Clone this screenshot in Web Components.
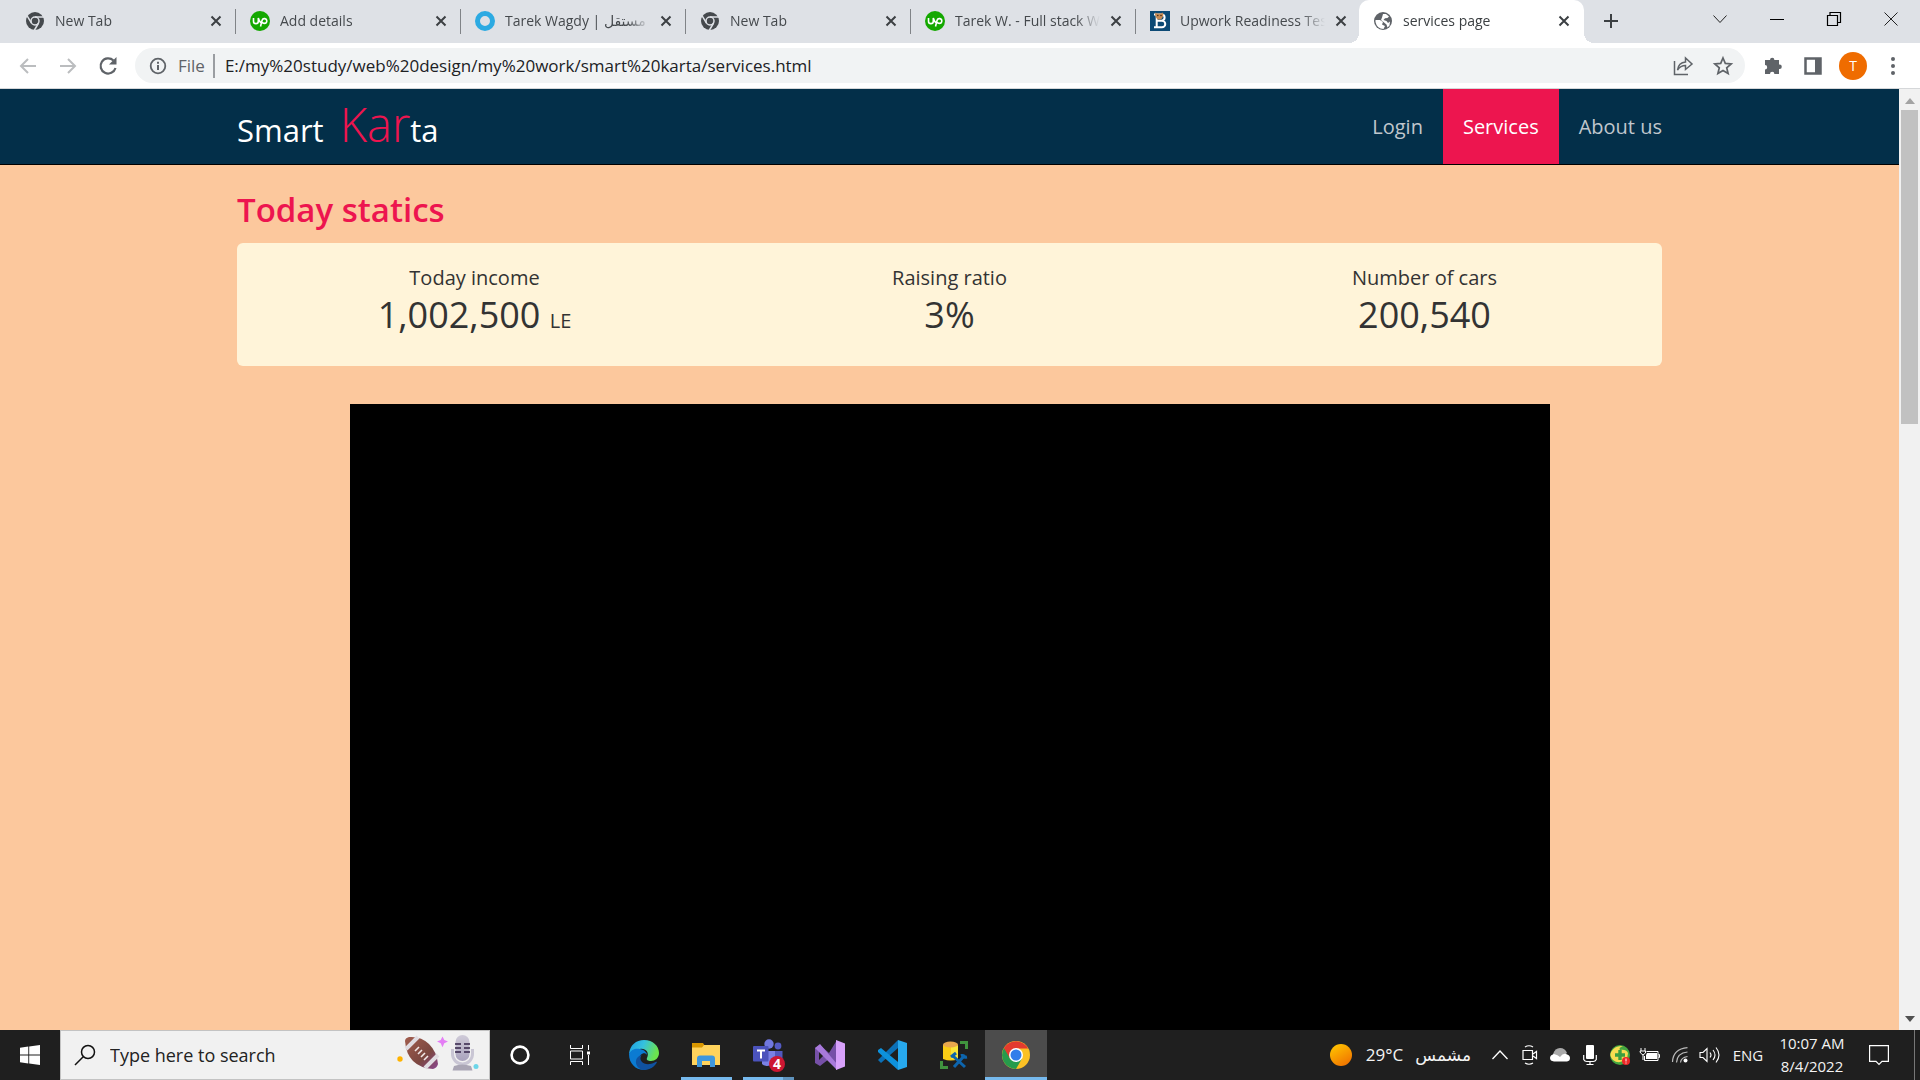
<!DOCTYPE html>
<html lang="en">
<head>
<meta charset="utf-8">
<title>services page</title>
<style>
html, body { margin: 0; height: 100%; }
body { font-family: "Open Sans", "Noto Sans", "DejaVu Sans", sans-serif; overflow: hidden; }
</style>
</head>
<body>
<desktop-screen>
  <browser-tabs slot="browser">
    <browser-tab icon="chromeGrey">New Tab</browser-tab>
    <browser-tab icon="upwork">Add details</browser-tab>
    <browser-tab icon="ring">Tarek Wagdy | مستقل</browser-tab>
    <browser-tab icon="chromeGrey">New Tab</browser-tab>
    <browser-tab icon="upwork">Tarek W. - Full stack Web</browser-tab>
    <browser-tab icon="bear">Upwork Readiness Test</browser-tab>
    <browser-tab icon="globe" active>services page</browser-tab>
  </browser-tabs>
  <browser-toolbar slot="browser"></browser-toolbar>
  <page-view slot="page">
    <site-header>
      <nav-link>Login</nav-link>
      <nav-link active>Services</nav-link>
      <nav-link>About us</nav-link>
    </site-header>
    <site-stats>
      <stat-item label="Today income">1,002,500 <small>LE</small></stat-item>
      <stat-item label="Raising ratio">3%</stat-item>
      <stat-item label="Number of cars">200,540</stat-item>
    </site-stats>
    <media-panel></media-panel>
  </page-view>
  <task-bar slot="taskbar"></task-bar>
</desktop-screen>

<script>
const ICONS = {
  chromeGrey: [20, 20, `<circle cx="10" cy="10" r="9" fill="#45494d"/><circle cx="10" cy="10" r="4" fill="none" stroke="#dee1e6" stroke-width="1.5"/><path d="M10 5.9h9M6.5 12.1 2 4.6M13.6 12 9.2 19.5" stroke="#dee1e6" stroke-width="1.5"/>`],
  upwork: [20, 20, `<circle cx="10" cy="10" r="10" fill="#14a800"/><path d="M3.5 7v3.2a2.4 2.4 0 0 0 4.8 0V7q1.4 4.500 3.600 5.200M10.500 15.500l1.600-6.200a2.400 2.400 0 1 1 2.300 3.100q-1.600 0-3.200-2" fill="none" stroke="#fff" stroke-width="1.600"/>`],
  ring: [20, 20, `<circle cx="10" cy="10" r="7.500" fill="#dee1e6" stroke="#2caae2" stroke-width="5"/>`],
  bear: [20, 20, `<path fill="#0c4a75" d="M0 0h20v20H0z"/><path d="M4 3.500h7.500a3 3 0 0 1 0 6.200H7.500h4.500a3.200 3.200 0 0 1 0 6.500H4M6.700 4v12" fill="none" stroke="#fff" stroke-width="2"/><path fill="#c68c55" d="M5.500 1.500 7 2.500h4l1.500-1 1 2-1 3-1.500 2H7.500L6 6.500l-1-3z"/><circle cx="7.800" cy="4.500" r=".8" fill="#4b2d16"/><circle cx="11" cy="4.500" r=".8" fill="#4b2d16"/>`],
  globe: [20, 20, `<circle cx="10" cy="10" r="9" fill="#5f6368"/><path d="M2.500 9h4.500l3 2-1 2.500 3 1.500-1.500 3Q4 18 2.500 11zM10 3h3l3 2.500-1.500 1.500-2.500.3L10.500 9l3 1 1.500 2 2-1.500-.5 4-2 2-1-3-3-2.500-2.500-2L9 6.500z" fill="#fff"/>`],
  x: [12, 12, `<path d="m1.500 1.500 9 9m0-9-9 9" stroke="#3c4043" stroke-width="2"/>`],
  plus: [16, 16, `<path d="M8 1v14M1 8h14" stroke="#3c4043" stroke-width="2"/>`],
  down: [14, 10, `<path d="m.5 1.500 6.500 7 6.500-7" fill="none" stroke="#222"/>`],
  min: [14, 14, `<path d="M0 7.500h14" stroke="#000"/>`],
  restore: [14, 14, `<path d="M.5 3.500h10v10H.5zM3 3.500v-3h10.500v10H11" fill="none" stroke="#000" stroke-width="1.200"/>`],
  close: [14, 14, `<path d="m.5.5 13 13m0-13-13 13" stroke="#222"/>`],
  back: [18, 18, `<path d="M17 9H2m7-7L2 9l7 7" fill="none" stroke="#bbbdbf" stroke-width="2"/>`],
  forward: [18, 18, `<path d="M1 9h15M9 2l7 7-7 7" fill="none" stroke="#bbbdbf" stroke-width="2"/>`],
  reload: [20, 20, `<path d="M15.500 4.500A7.600 7.600 0 1 0 17.500 12" fill="none" stroke="#5f6368" stroke-width="2.200"/><path fill="#5f6368" d="M18.500 1v7.500H11z"/>`],
  info: [18, 18, `<circle cx="9" cy="9" r="7.300" fill="none" stroke="#5f6368" stroke-width="1.800"/><path d="M9 8v5M9 4.800v2" stroke="#5f6368" stroke-width="2"/>`],
  share: [20, 20, `<path d="M1.500 5v13.500H15" fill="none" stroke="#5f6368" stroke-width="1.500"/><path d="M4.500 14q1-7.500 8-8V2L19 8l-6.500 5.500v-4Q7.500 9.500 4.500 14z" fill="none" stroke="#5f6368" stroke-width="1.500"/>`],
  star: [20, 20, `<path d="m10 2 2.300 5.400 5.900.5-4.500 3.900 1.400 5.700-5.100-3.100-5.100 3.100 1.400-5.700L1.800 7.900l5.900-.5z" fill="none" stroke="#5f6368" stroke-width="1.700"/>`],
  puzzle: [20, 20, `<path fill="#5f6368" d="M7 4a2.200 2.200 0 0 1 4.400 0H16v4.600h.6a2.200 2.200 0 0 1 0 4.400H16v5h-4.600a2.200 2.200 0 0 0-4.400 0H2v-4.600a2.200 2.200 0 0 0 0-4.400V4z"/>`],
  panel: [18, 20, `<path d="M1.500 2.500h15v15h-15z" fill="none" stroke="#5f6368" stroke-width="2.500"/><path fill="#5f6368" d="M11 2h6v16h-6z"/>`],
  dots: [4, 18, `<g fill="#5f6368"><circle cx="2" cy="2" r="2"/><circle cx="2" cy="9" r="2"/><circle cx="2" cy="16" r="2"/></g>`],
  win: [20, 20, `<path fill="#fff" d="m0 2.700 8.300-1.100v8H0zM9.200 1.500 20 0v9.600H9.200zM0 10.500h8.300v8L0 17.300zM9.200 10.500H20V20L9.200 18.600z"/>`],
  search: [22, 22, `<circle cx="14" cy="8" r="6.500" fill="none" stroke="#111" stroke-width="1.500"/><path d="M9.200 12.800 1 21" stroke="#111" stroke-width="1.500"/>`],
  doodle: [82, 40, `<defs><linearGradient id="b" x2="1" y2="1"><stop stop-color="#a25d4e"/><stop offset=".6" stop-color="#7b4740"/><stop offset="1" stop-color="#8b4790"/></linearGradient><linearGradient id="m" x2="0" y2="1"><stop stop-color="#cfcbd8"/><stop offset="1" stop-color="#a9a3bd"/></linearGradient></defs>
   <path fill="url(#b)" d="M8 6q0-3 4-4 12-1 20 7t9 20q-1 4-5 5-13-1-20-8T8 6z"/><path d="M9 14 21 2M28 33l13-13" stroke="#e0dce2" stroke-width="4"/><path d="m18 16 4-4m-1 7 4-4m-1 7 4-4m-1 7 4-4" stroke="#f2e8e8" stroke-width="1.600"/><circle cx="3" cy="24" r="2.700" fill="#ffb300"/><path fill="#e47ef5" d="m45.500 1.500 1.800 3.500 3.700 1.500-3.700 1.800-1.800 4-1.800-4L40 6.500 43.700 5z"/>
   <path d="M55.500 14v5a10 10 0 0 0 20 0v-5M65.500 29v5" fill="none" stroke="#c9c6d4" stroke-width="3"/><rect x="58.500" y="0" width="14" height="26" rx="7" fill="url(#m)"/><path d="M58 9h6m3 0h6M58 13h6m3 0h6M58 17h6m3 0h6" stroke="#342449" stroke-width="1.700"/><path fill="#aaa6b5" d="M57 31q8-3 17 0l1.500 4.500h-20z"/><circle cx="79" cy="31.500" r="2.500" fill="#6bd5e8"/>`],
  cortana: [20, 20, `<circle cx="10" cy="10" r="8.400" fill="none" stroke="#fff" stroke-width="2.600"/>`],
  taskview: [20, 20, `<path d="M.5 0v3.500h12V0M.5 20v-3.500h12V20M.5 6h12v8H.5zM18.500 0v5m0 5v10" fill="none" stroke="#fff"/><path fill="#fff" d="M17 6.500h3v3h-3z"/>`],
  edge: [30, 30, `<defs><linearGradient id="e" x2="1" y2=".3"><stop stop-color="#1b9de2"/><stop offset=".5" stop-color="#35c1df"/><stop offset="1" stop-color="#6be34d"/></linearGradient></defs><path fill="url(#e)" d="M0 14C1 5 7 0 15 0c9 0 15 6 15 13 0 5-4 8-8 8-3 0-5-1-4-3 3-6-2-10-7-9C6 9 2 12 0 14z"/><path fill="#0b7bd2" d="M0 14C2 9 7 8 11 9c5 1 7 4 7 6-2-4-8-1-8 4 0 6 5 10 11 9-9 5-21-1-21-14z"/><path fill="#10529f" d="M12.500 15C9 21 15 25 21 24c4-.5 6-3 7-2-2 5-8 8-13 8-8 0-12-12-2.500-15z"/>`],
  folder: [28, 24, `<path fill="#d99700" d="M0 0h11l2 3h6v5H0z"/><path fill="#ffd35c" d="M0 4.500h10l2-2.500h16v20H0z"/><path fill="#3e97dd" d="M8 12.500h12a3 3 0 0 1 3 3V24h-5v-6h-8v6H5v-8.500a3 3 0 0 1 3-3z"/>`],
  teams: [34, 32, `<circle cx="18" cy="5" r="4.700" fill="#7178df"/><circle cx="27" cy="7" r="3.400" fill="#545bc4"/><path fill="#7a81e5" d="M11 12h13v9a8 8 0 0 1-13 4z"/><path fill="#5158bd" d="M24 12h7.500v10q-3 5-7.500 1z"/><rect x="2" y="7" width="15.500" height="15.500" rx="1" fill="#4b53bc"/><path d="M6 11.500h8M10 11.500v8" stroke="#fff" stroke-width="2"/><circle cx="26" cy="25" r="8" fill="#cc1733"/>`],
  vs: [30, 30, `<path fill="#7650a7" d="M0 8 5 5l9 8L22 0v30l-8-11-9 7-5-3zM4 11v9l5-5z" fill-rule="evenodd"/><path fill="#a879db" d="m0 8 5-4 17 20v6L1 9z"/><path fill="#d8a1fb" d="m21 0 9 3.500v23L21 30z"/>`],
  vscode: [30, 30, `<path fill="#0b70b7" d="M1 20 21 0v8L4 23z"/><path fill="#0d91dc" d="m1 10 3-2 17 14v8L1 12z"/><path fill="#27a9ee" d="m21 0 9 3v24l-9 3z"/>`],
  sql: [28, 28, `<path fill="#f9cc15" d="M3 4h15v14q-7 3-15 0z"/><path fill="#f9e63a" d="M11 5h7v13h-7z"/><ellipse cx="10.500" cy="3.500" rx="7.500" ry="3" fill="#e8a74d"/><path d="M20 1.500h6.500V8M1.500 20v6.500H8" fill="none" stroke="#40933e" stroke-width="3"/><path d="m14 26 11-12M13 15l12 11" stroke="#0d65ad" stroke-width="3"/><path d="m11 16 5-4M22 13q0 4 5 3" fill="none" stroke="#0d65ad" stroke-width="3"/>`],
  chrome: [28, 28, `<circle cx="14" cy="14" r="14" fill="#fbc125"/><path fill="#269b4c" d="M14 14 1.900 7A14 14 0 0 0 14 28l6-10.500z"/><path fill="#e33b2e" d="M1.900 7a14 14 0 0 1 24.200 0.500H14L8 17.500z"/><circle cx="14" cy="14" r="7" fill="#fff"/><circle cx="14" cy="14" r="5.500" fill="#327eea"/>`],
  sun: [22, 22, `<defs><linearGradient id="s" x1=".2" x2=".8" y2="1"><stop stop-color="#ffc400"/><stop offset="1" stop-color="#f07000"/></linearGradient></defs><circle cx="11" cy="11" r="11" fill="url(#s)"/>`],
  up: [16, 10, `<path d="m.5 9 7.500-8 7.500 8" fill="none" stroke="#fff" stroke-width="1.300"/>`],
  meet: [16, 20, `<path d="M1 5.500h9.500v9H1zM11 9l3.500-2.500v7L11 11M3 2q4-2.500 8 0M3 18q4 2.500 8 0" fill="none" stroke="#fff" stroke-width="1.200"/>`],
  cloud: [20, 14, `<path fill="#aaa" d="M3 6Q5 0 10 0q5 0 7 5L9 12H3z"/><path fill="#fff" d="M4 13.500Q0 13 0 10q0-3 4-4 4 1 6 3 3-4 6-3 4 1 4 4t-3 3.500z"/>`],
  mic: [14, 20, `<rect x="3" width="8" height="14" rx="1" fill="#fff"/><path d="M.7 10v4.500q1 2 3 2h6.600q2 0 3-2V10M7 16.500v3M3.500 19.500h7" fill="none" stroke="#fff" stroke-width="1.200"/>`],
  antivirus: [20, 20, `<circle cx="10" cy="10" r="10" fill="#45a840"/><path fill="#f7dc51" d="M1 7q4-7 12-6-5 2-3 4 6-1 8 3l-1 6q-8 6-14 1-4-4-2-8z"/><path d="M10 5v10M5 10h10" stroke="#3c9e40" stroke-width="3.400"/><circle cx="16" cy="16" r="4" fill="#ee2828"/><path d="M16 13.500v3m0 1v1" stroke="#fff"/>`],
  battery: [20, 14, `<path fill="#fff" d="M7 5h10v6H6V7z"/><path d="M6.500 3.500h11.500v9H4.500V8M18.500 6.500h1v3h-1M1 0v3m4-3v3M0 3h5.500v2L3 7 .5 5zM3 7v5" fill="none" stroke="#fff"/>`],
  wifi: [16, 16, `<path d="M.5 15Q1 2 15.500.7M4.500 15.500Q5 6 15.500 5M8.500 15.500Q9 10.500 15.500 9.500" fill="none" stroke="#bbb" stroke-width="1.200"/><circle cx="13.500" cy="13.500" r="2" fill="#fff"/>`],
  sound: [22, 18, `<path d="M1 6.500h3l4-4v13l-4-4H1zM11 6.500q2 2.500 0 5M14 4q4 5 0 10M17 1.500q6 7.500 0 15" fill="none" stroke="#fff" stroke-width="1.100"/>`],
  note: [20, 20, `<path d="M.6.600h18.800v15.800H13l-3 3-3-3H.6z" fill="none" stroke="#fff" stroke-width="1.200"/>`],
  arrowUp: [10, 6, `<path fill="#a3a3a3" d="m5 0 5 6H0z"/>`],
  arrowDown: [10, 6, `<path fill="#505050" d="M0 0h10L5 6z"/>`]
};

function define(name, render) {
  customElements.define(name, class extends HTMLElement {
    constructor() { super(); this.attachShadow({ mode: "open" }); }
    connectedCallback() {
      const t = document.createElement("template");
      t.innerHTML = render(this);
      this.shadowRoot.replaceChildren(t.content.cloneNode(true));
    }
  });
}
const RESET = `button, input { font: inherit; color: inherit; border: 0; margin: 0; padding: 0; background: none; outline: 0; }
button { display: flex; align-items: center; justify-content: center; }`;

define("ui-icon", el => {
  const [w, h, body] = ICONS[el.getAttribute("name")];
  return `<style>:host { display: block; flex: none; } svg { display: block; overflow: visible; }</style>
  <svg width="${w}" height="${h}" viewBox="0 0 ${w} ${h}" aria-hidden="true">${body}</svg>`;
});

define("desktop-screen", () => `<style>
  :host { display: flex; flex-direction: column; height: 100vh; }
  main { flex: 1; min-height: 0; display: flex; }
  ::slotted(page-view) { flex: 1; }
  </style><slot name="browser"></slot><main><slot name="page"></slot></main><slot name="taskbar"></slot>`);

define("browser-tabs", () => `<style>${RESET}
  :host { display: flex; height: 43px; background: #dee1e6; padding-left: 11px; }
  .tabs { display: flex; flex: 0 1 1575px; min-width: 0; }
  .add { width: 50px; height: 42px; }
  .window { display: flex; margin-left: auto; padding-right: 1px; }
  .window button { width: 57px; height: 38px; }
  </style>
  <div class="tabs"><slot></slot></div>
  <button class="add" aria-label="New tab"><ui-icon name="plus"></ui-icon></button>
  <div class="window">${["down", "min", "restore", "close"].map(n => `<button aria-label="${n}"><ui-icon name="${n}"></ui-icon></button>`).join("")}</div>`);

define("browser-tab", el => `<style>${RESET}
  :host { display: flex; flex: 1 1 0; min-width: 0; height: 43px; box-sizing: border-box; align-items: center; gap: 10px; padding: 0 14px 1px; font-size: 14px; line-height: 20px; color: #45494d; position: relative; }
  :host(:not([active]))::after { content: ""; position: absolute; right: 0; top: 9px; width: 1px; height: 25px; background: #808387; }
  :host(:nth-last-child(2))::after { display: none; }
  :host([active]) { background: #fff; border-radius: 10px 10px 0 0; color: #3c4043; margin: 0 2px 0 -2px; }
  :host([active])::before, :host([active])::after { content: ""; position: absolute; bottom: 0; width: 10px; height: 10px; }
  :host([active])::before { right: 100%; background: radial-gradient(circle at 0 0, transparent 10px, #fff 10px); }
  :host([active])::after { left: 100%; background: radial-gradient(circle at 100% 0, transparent 10px, #fff 10px); }
  .title { flex: 1; min-width: 0; overflow: hidden; white-space: nowrap; -webkit-mask-image: linear-gradient(90deg, #000 calc(100% - 24px), transparent); }
  </style>
  <ui-icon name="${el.getAttribute("icon")}"></ui-icon><span class="title"><slot></slot></span>
  <button aria-label="Close tab"><ui-icon name="x"></ui-icon></button>`);

define("browser-toolbar", () => `<style>${RESET}
  :host { display: flex; align-items: center; height: 45px; background: #fff; border-bottom: 1px solid #d5d7d9; padding: 0 7px 0 8px; }
  button { width: 40px; height: 40px; flex: none; }
  .box { flex: 1; display: flex; align-items: center; height: 35px; margin: 0 8px 0 7px; padding: 0 2px 0 14px; border-radius: 18px; background: #f1f3f4; font-size: 17px; line-height: 24px; color: #202124; }
  label { color: #5f6368; padding: 0 8px 0 11px; border-right: 2px solid #9a9da1; line-height: 24px; }
  input { flex: 1; min-width: 0; padding-left: 10px; }
  .avatar { display: flex; align-items: center; justify-content: center; width: 28px; height: 28px; border-radius: 50%; background: #ef6c00; color: #fff; font-size: 14px; line-height: 20px; }
  </style>
  <button aria-label="Back"><ui-icon name="back"></ui-icon></button>
  <button aria-label="Forward"><ui-icon name="forward"></ui-icon></button>
  <button aria-label="Reload"><ui-icon name="reload"></ui-icon></button>
  <div class="box"><ui-icon name="info"></ui-icon><label for="url">File</label>
    <input id="url" type="text" value="E:/my%20study/web%20design/my%20work/smart%20karta/services.html">
    <button aria-label="Share"><ui-icon name="share"></ui-icon></button>
    <button aria-label="Bookmark"><ui-icon name="star"></ui-icon></button></div>
  <button aria-label="Extensions"><ui-icon name="puzzle"></ui-icon></button>
  <button aria-label="Side panel"><ui-icon name="panel"></ui-icon></button>
  <button aria-label="Profile"><span class="avatar">T</span></button>
  <button aria-label="Menu"><ui-icon name="dots"></ui-icon></button>`);

define("page-view", () => `<style>
  :host { display: flex; min-width: 0; overflow: hidden; background: #fcc89d; }
  .content { flex: 1; min-width: 0; display: flex; flex-direction: column; }
  .scroll { width: 21px; box-sizing: border-box; background: #f1f1f1; display: flex; flex-direction: column; align-items: center; padding: 9px 0 8px; }
  .thumb { width: 17px; height: 314px; margin: 6px 0 auto; background: #c1c1c1; }
  </style>
  <div class="content"><slot></slot></div>
  <div class="scroll"><ui-icon name="arrowUp"></ui-icon><div class="thumb"></div><ui-icon name="arrowDown"></ui-icon></div>`);

define("site-header", () => `<style>
  :host { display: block; background: #032f49; border-bottom: 1px solid #000; }
  .inner { max-width: 1425px; margin: 0 auto; height: 75px; display: flex; justify-content: space-between; }
  .brand { color: #fff; font-size: 31px; line-height: 70px; font-weight: 400; text-decoration: none; white-space: pre; }
  .brand span { color: #ed154f; font-size: 47px; font-weight: 300; }
  nav { display: flex; margin-right: -20px; }
  </style>
  <div class="inner"><a class="brand" href="#">Smart  <span>Kar</span>ta</a><nav><slot></slot></nav></div>`);

define("nav-link", () => `<style>
  :host { display: block; }
  a { display: block; padding: 0 20px; font-size: 20px; line-height: 75px; color: #c0c7cd; text-decoration: none; }
  :host([active]) a { background: #ed154f; color: #fff; }
  </style><a href="#"><slot></slot></a>`);

define("site-stats", () => `<style>
  :host { display: block; width: 100%; max-width: 1425px; margin: 0 auto; }
  h1 { margin: 22px 0 11px; font-size: 33px; line-height: 45px; font-weight: 600; color: #ed154f; }
  .card { display: flex; height: 123px; box-sizing: border-box; padding: 19px 0; border-radius: 6px; background: #fff4d9; }
  </style><h1>Today statics</h1><div class="card"><slot></slot></div>`);

define("stat-item", el => `<style>
  :host { display: block; flex: 1; text-align: center; color: #333; }
  .label { font-size: 20px; line-height: 32px; }
  .value { font-size: 36px; line-height: 42px; }
  ::slotted(small) { font-size: 20px; font-weight: 500; }
  </style><div class="label">${el.getAttribute("label")}</div><div class="value"><slot></slot></div>`);

define("media-panel", () => `<style>
  :host { display: block; flex: 1; width: 100%; max-width: 1200px; margin: 38px auto 0; background: #000; }
  </style>`);

define("task-icon", el => `<style>${RESET}
  :host { display: block; width: 62px; height: 50px; position: relative; }
  :host([plain]) { width: 60px; }
  :host([active]) { background: #4c4c4c; }
  button { width: 100%; height: 100%; }
  :host([open])::after { content: ""; position: absolute; left: 6px; right: 5px; bottom: 0; height: 3px; background: #76b9ed; }
  :host([stack])::after { background: linear-gradient(90deg, #76b9ed 40px, #5f93bd 40px); }
  :host([active])::after { left: 0; right: 0; }
  b { position: absolute; right: 13px; bottom: 5px; width: 18px; font-size: 14px; line-height: 22px; text-align: center; color: #fff; }
  </style><button aria-label="${el.getAttribute("icon")}"><ui-icon name="${el.getAttribute("icon")}"></ui-icon></button>${el.hasAttribute("badge") ? `<b>${el.getAttribute("badge")}</b>` : ""}`);

define("task-bar", () => `<style>${RESET}
  :host { display: flex; height: 50px; background: #1f1f1f; color: #f3f3f3; }
  .start { width: 60px; height: 50px; }
  .search { width: 430px; box-sizing: border-box; display: flex; align-items: center; gap: 14px; padding: 0 10px 0 13px; border: 1px solid #c3c3c3; background: #f1f1f1; color: #222; font-size: 18px; line-height: 24px; }
  .search input { flex: 1; min-width: 0; }
  .search input::placeholder { color: #222; opacity: 1; }
  .pinned { display: flex; padding-left: 3px; }
  .tray { display: flex; align-items: center; margin-left: auto; }
  .weather { gap: 14px; padding-right: 14px; font-size: 17px; line-height: 24px; }
  .weather span { display: flex; gap: 12px; }
  .small { width: 30px; height: 50px; }
  .lang { width: 46px; font-size: 15px; line-height: 20px; }
  .clock { width: 82px; font-size: 15px; line-height: 23px; text-align: center; }
  .note { width: 52px; height: 50px; }
  .desk { width: 6px; height: 50px; margin-left: 9px; border-left: 1px solid #777; box-sizing: border-box; }
  </style>
  <button class="start" aria-label="Start"><ui-icon name="win"></ui-icon></button>
  <div class="search"><ui-icon name="search"></ui-icon><input type="text" aria-label="Search" placeholder="Type here to search"><ui-icon name="doodle"></ui-icon></div>
  <task-icon plain icon="cortana"></task-icon><task-icon plain icon="taskview"></task-icon>
  <div class="pinned"><task-icon icon="edge"></task-icon><task-icon icon="folder" open></task-icon><task-icon icon="teams" badge="4" open stack></task-icon><task-icon icon="vs"></task-icon><task-icon icon="vscode"></task-icon><task-icon icon="sql"></task-icon><task-icon icon="chrome" open active></task-icon></div>
  <div class="tray"><button class="weather"><ui-icon name="sun"></ui-icon><span><span>29°C</span><span>مشمس</span></span></button>
  ${["up", "meet", "cloud", "mic", "antivirus", "battery", "wifi", "sound"].map(n => `<button class="small" aria-label="${n}"><ui-icon name="${n}"></ui-icon></button>`).join("")}
  <button class="lang">ENG</button><div class="clock">10:07 AM<br>8/4/2022</div>
  <button class="note" aria-label="Notifications"><ui-icon name="note"></ui-icon></button><button class="desk" aria-label="Show desktop"></button></div>`);
</script>
</body>
</html>
